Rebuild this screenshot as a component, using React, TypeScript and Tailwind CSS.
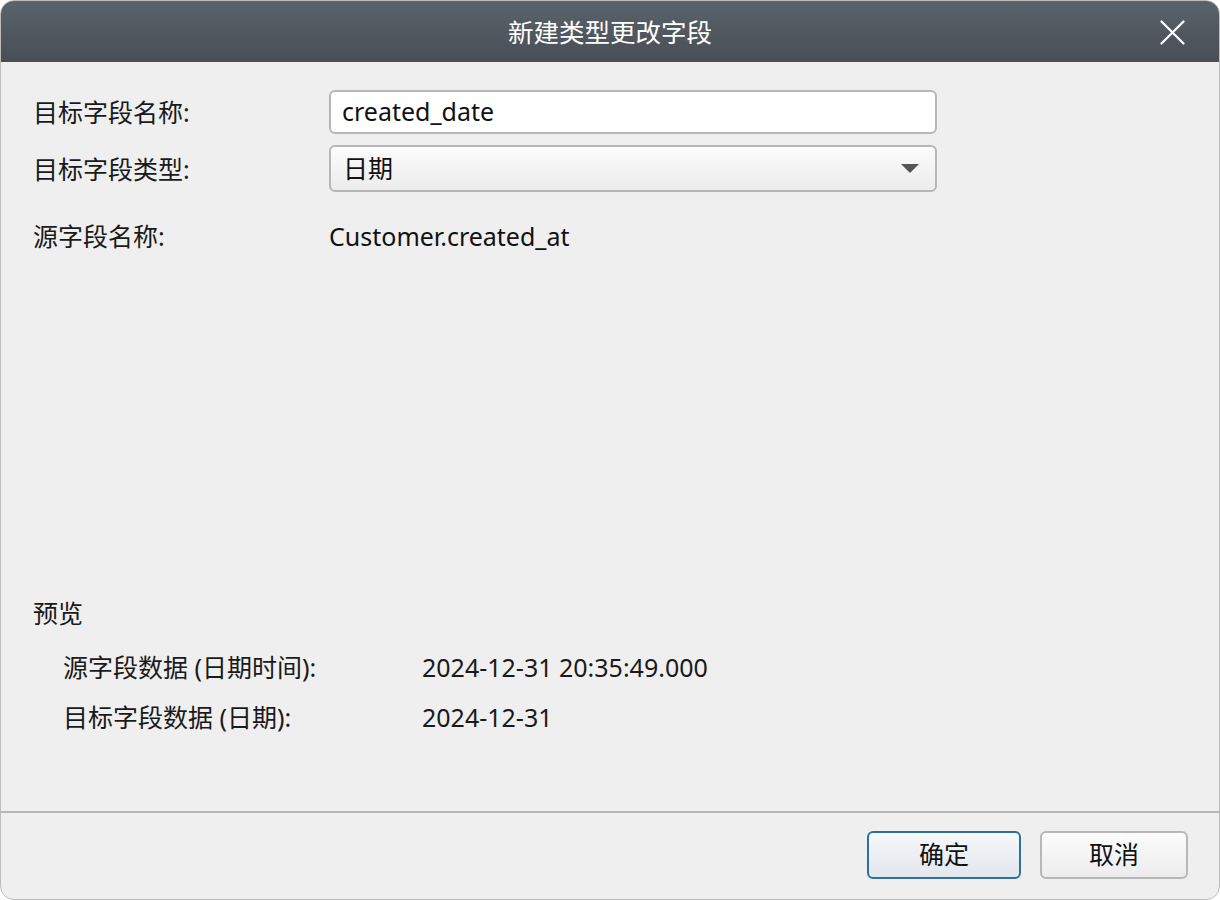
const FONT = "font-['Noto_Sans','Noto_Sans_CJK_SC',sans-serif]"

function FieldLabel({ children }: { children: React.ReactNode }) {
  return <div className="w-[296px] shrink-0 text-[25px] leading-[32px] text-[#1a1a1a]">{children}</div>
}

export default function App() {
  return (
    <div className={`${FONT} w-[1220px] h-[900px] bg-white`}>
      <div className="flex flex-col h-full rounded-[14px] overflow-hidden border border-[#bdbdbd] bg-[#efefef]">
        {/* Title bar */}
        <div className="relative h-[61px] shrink-0 flex items-center justify-center bg-gradient-to-b from-[#5a636b] to-[#484e55]">
          <span className="text-white text-[25.5px] leading-[32px]">新建类型更改字段</span>
          <button className="absolute right-[34px] top-[19px] text-white">
            <svg width="25" height="25" viewBox="0 0 25 25" fill="none" stroke="currentColor" strokeWidth="2.2" strokeLinecap="round">
              <path d="M1.5 1.5 L23.5 23.5 M23.5 1.5 L1.5 23.5" />
            </svg>
          </button>
        </div>

        {/* Body */}
        <div className="flex-1 flex flex-col pl-[32px] pr-[282px]">
          <div className="flex items-center mt-[28px]">
            <FieldLabel>目标字段名称:</FieldLabel>
            <div className="flex-1 h-[44px] flex items-center px-[11px] bg-white border-2 border-[#b7b7b7] rounded-[6px] text-[25px] text-[#111]">
              created_date
            </div>
          </div>
          <div className="flex items-center mt-[11px]">
            <FieldLabel>目标字段类型:</FieldLabel>
            <div className="flex-1 h-[47px] flex items-center justify-between pl-[12px] pr-[16px] bg-gradient-to-b from-[#fcfcfc] to-[#ececec] border-2 border-[#b7b7b7] rounded-[6px] text-[25px] text-[#111]">
              <span>日期</span>
              <svg width="18" height="10" viewBox="0 0 18 10">
                <path d="M0 0 L18 0 L9 9 Z" fill="#555" />
              </svg>
            </div>
          </div>
          <div className="flex items-center mt-[28px]">
            <FieldLabel>源字段名称:</FieldLabel>
            <span className="text-[25px] leading-[32px] text-[#111]">Customer.created_at</span>
          </div>

          <div className="flex-1" />

          <div className="text-[25px] leading-[32px] text-[#1a1a1a]">预览</div>
          <div className="flex flex-col gap-[18px] mt-[22px] pl-[30px] mb-[78px] text-[25px] leading-[32px] text-[#1a1a1a]">
            <div className="flex">
              <div className="w-[359px] shrink-0">源字段数据 (日期时间):</div>
              <div>2024-12-31 20:35:49.000</div>
            </div>
            <div className="flex">
              <div className="w-[359px] shrink-0">目标字段数据 (日期):</div>
              <div>2024-12-31</div>
            </div>
          </div>
        </div>

        {/* Footer */}
        <div className="h-[88px] shrink-0 border-t-2 border-[#b7b7b7] flex items-start justify-end gap-[19px] pt-[18px] pr-[31px]">
          <button className="w-[154px] h-[48px] rounded-[6px] border-2 border-[#2f6f9f] bg-gradient-to-b from-[#f6f8fa] to-[#e2e7ec] text-[25px] text-[#111]">
            确定
          </button>
          <button className="w-[148px] h-[48px] rounded-[6px] border-2 border-[#b7b7b7] bg-gradient-to-b from-[#fcfcfc] to-[#ececec] text-[25px] text-[#111]">
            取消
          </button>
        </div>
      </div>
    </div>
  )
}
